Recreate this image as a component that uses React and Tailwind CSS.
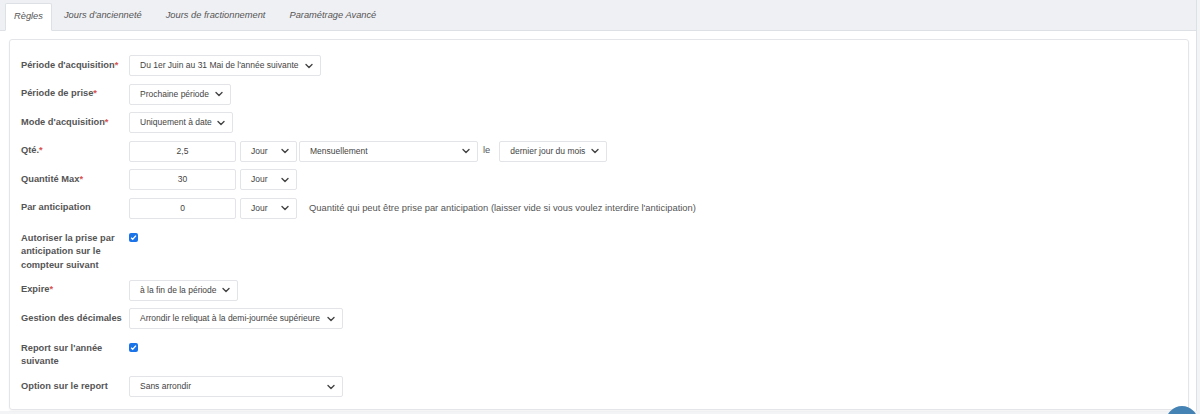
import React from "react";

function Chevron() {
  return (
    <svg width="8" height="6" viewBox="0 0 8 6" className="shrink-0">
      <path d="M1 1.5l3 3 3-3" fill="none" stroke="#444" strokeWidth="1.4" strokeLinecap="round" strokeLinejoin="round" />
    </svg>
  );
}

function Select({ value, w }) {
  return (
    <div className={`${w} h-[21px] flex items-center justify-between border border-[#e2e4e8] rounded-[2px] bg-white pl-[10px] pr-[7px] text-[8.5px] text-[#444] shrink-0`}>
      <span className="whitespace-nowrap">{value}</span>
      <Chevron />
    </div>
  );
}

function Input({ value }) {
  return (
    <div className="w-[107px] h-[21px] flex items-center justify-center border border-[#e2e4e8] rounded-[2px] bg-white text-[8.5px] text-[#444] shrink-0">
      {value}
    </div>
  );
}

function Check() {
  return (
    <span className="mt-[1px] w-[9px] h-[9px] rounded-[2px] bg-[#1a73e8] flex items-center justify-center">
      <svg width="7" height="7" viewBox="0 0 8 8">
        <path d="M1.3 4.2l1.8 1.8L6.8 1.8" fill="none" stroke="white" strokeWidth="1.5" />
      </svg>
    </span>
  );
}

function Label({ children, req }) {
  return (
    <div className="w-[108px] shrink-0 text-[9.3px] font-bold text-[#555] leading-[13.5px]">
      {children}
      {req && <span className="text-[#d9534f]">*</span>}
    </div>
  );
}

function Row({ label, req, children }) {
  return (
    <div className="flex items-center h-[21px]">
      <Label req={req}>{label}</Label>
      <div className="flex items-center">{children}</div>
    </div>
  );
}

export default function App() {
  const tabs = ["Jours d'ancienneté", "Jours de fractionnement", "Paramétrage Avancé"];

  return (
    <div className="relative w-[1200px] h-[414px] bg-[#f3f4f6] overflow-hidden font-['Liberation_Sans',Arial,sans-serif]">
      <div className="w-[1197px] bg-white border-r border-[#dde0e5]">
        {/* tabs */}
        <div className="flex items-end h-[31px] bg-[#eff0f4] border-b border-[#dde0e5] pl-[5px]">
          <div className="h-[28px] -mb-px px-[8px] flex items-center bg-white border border-[#dde0e5] border-b-white rounded-t-[2px] text-[9.3px] italic text-[#555]">
            Règles
          </div>
          {tabs.map((t) => (
            <div key={t} className="h-[28px] px-[12px] flex items-center text-[9.3px] italic text-[#555]">
              {t}
            </div>
          ))}
        </div>

        {/* content */}
        <div className="pt-[8px] pl-[9px] pr-[7px] pb-px">
          <div className="border border-[#e3e5e8] rounded-[3px] shadow-[0_1px_2px_rgba(0,0,0,0.05)] pt-[15px] pb-[14px] pl-[11px] h-[371px]">
            <div className="flex flex-col gap-[7.5px]">
              <Row label="Période d'acquisition" req>
                <Select value="Du 1er Juin au 31 Mai de l'année suivante" w="w-[192px]" />
              </Row>
              <Row label="Période de prise" req>
                <Select value="Prochaine période" w="w-[102px]" />
              </Row>
              <Row label="Mode d'acquisition" req>
                <Select value="Uniquement à date" w="w-[104px]" />
              </Row>
              <Row label="Qté." req>
                <Input value="2,5" />
                <div className="w-[4px]" />
                <Select value="Jour" w="w-[57px]" />
                <div className="w-[2px]" />
                <Select value="Mensuellement" w="w-[179px]" />
                <span className="text-[9.3px] text-[#555] ml-[5px] mr-[9px]">le</span>
                <Select value="dernier jour du mois" w="w-[108px]" />
              </Row>
              <Row label="Quantité Max" req>
                <Input value="30" />
                <div className="w-[4px]" />
                <Select value="Jour" w="w-[57px]" />
              </Row>
              <Row label="Par anticipation">
                <Input value="0" />
                <div className="w-[4px]" />
                <Select value="Jour" w="w-[57px]" />
                <span className="ml-[12px] text-[9.4px] text-[#555] whitespace-nowrap">
                  Quantité qui peut être prise par anticipation (laisser vide si vous voulez interdire l'anticipation)
                </span>
              </Row>
              <div className="flex items-start pt-[5.5px]">
                <Label>Autoriser la prise par anticipation sur le compteur suivant</Label>
                <Check />
              </div>
              <Row label="Expire" req>
                <Select value="à la fin de la période" w="w-[109px]" />
              </Row>
              <Row label="Gestion des décimales">
                <Select value="Arrondir le reliquat à la demi-journée supérieure" w="w-[214px]" />
              </Row>
              <div className="flex items-start pt-[5px]">
                <Label>Report sur l'année suivante</Label>
                <Check />
              </div>
              <Row label="Option sur le report">
                <Select value="Sans arrondir" w="w-[214px]" />
              </Row>
            </div>
          </div>
        </div>
      </div>

      {/* floating help button */}
      <div className="absolute left-[1166px] top-[406px] w-[32px] h-[32px] rounded-full bg-[#4583b5]" />
    </div>
  );
}
